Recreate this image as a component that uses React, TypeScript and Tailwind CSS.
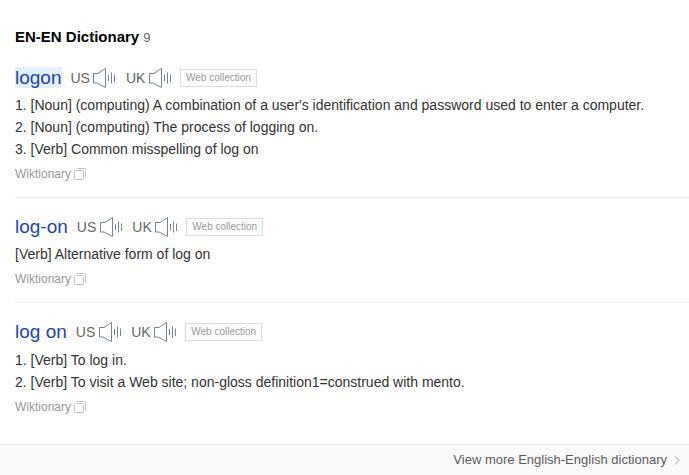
function Speaker() {
  return (
    <svg width="24" height="22" viewBox="0 0 24 22" fill="none" stroke="#76839a" className="shrink-0">
      <path d="M.5 6.5v9.5H4l8.5 4.5V1.5L5 6.5H.5M15.5 8v6M18.5 5.5v11M21.5 7.5v7.5" />
    </svg>
  );
}

function CopyIcon() {
  return (
    <svg width="13" height="13" viewBox="0 0 13 13" fill="none" stroke="#c4c4c4" className="ml-[3px] shrink-0">
      <rect x=".5" y="2.5" width="9" height="9" rx="1" />
      <path d="M2.5 .5h8q1 0 1 1v8" />
    </svg>
  );
}

type Item = { word: string; highlighted?: boolean; lines: string[] };

const items: Item[] = [
  {
    word: 'logon',
    highlighted: true,
    lines: [
      "1. [Noun] (computing) A combination of a user's identification and password used to enter a computer.",
      '2. [Noun] (computing) The process of logging on.',
      '3. [Verb] Common misspelling of log on',
    ],
  },
  { word: 'log-on', lines: ['[Verb] Alternative form of log on'] },
  {
    word: 'log on',
    lines: ['1. [Verb] To log in.', '2. [Verb] To visit a Web site; non-gloss definition1=construed with mento.'],
  },
];

export default function App() {
  return (
    <div className="flex h-[475px] w-[689px] flex-col overflow-hidden bg-white font-['Liberation_Sans',Arial,sans-serif] text-[#333]">
      <h1 className="mt-[27px] mb-5 ml-[15px] h-5 text-[15px] leading-5 font-bold text-black">
        EN-EN Dictionary <span className="text-[13px] font-normal text-[#666]">9</span>
      </h1>
      {items.map((it) => (
        <section
          key={it.word}
          className="group mb-[18px] ml-[15px] border-b border-[#eee] pb-3 last-of-type:mb-0 last-of-type:border-b-0 last-of-type:pb-0"
        >
          <div className="mb-[5px] flex h-[22px] items-center text-[14px] text-[#666] group-last-of-type:mb-1.5">
            <span className={`mr-[9px] self-start text-[19px] leading-[21px] text-[#1d43b4] ${it.highlighted ? 'bg-[#e3f1fd]' : ''}`}>
              {it.word}
            </span>
            <span className="mr-[3.5px]">US</span>
            <Speaker />
            <span className="mr-[3.5px] ml-[8.5px]">UK</span>
            <Speaker />
            <span className="ml-[7.1px] h-[18px] border border-[#ddd] px-[5px] text-[10px] leading-4 text-[#999]">Web collection</span>
          </div>
          {it.lines.map((l) => (
            <p key={l} className="text-[14px] leading-[22px] whitespace-nowrap">{l}</p>
          ))}
          <div className="mt-[3px] flex h-[22px] items-center text-[12px] text-[#999]">
            Wiktionary
            <CopyIcon />
          </div>
        </section>
      ))}
      <footer className="mt-auto flex h-[31px] shrink-0 items-center justify-end border-t border-[#eee] bg-[#fafafa] pr-[9px] text-[13px] text-[#5c5c5c]">
        View more English-English dictionary
        <svg width="6" height="9" viewBox="0 0 6 9" fill="none" stroke="#999" className="ml-[7px]">
          <path d="M1 .5 5 4.5 1 8.5" />
        </svg>
      </footer>
    </div>
  );
}
